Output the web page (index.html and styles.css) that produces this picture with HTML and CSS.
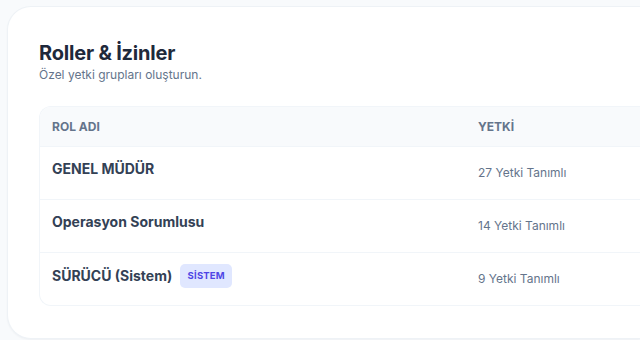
FILE: index.html
```html
<!DOCTYPE html>
<html lang="tr">
<head>
<meta charset="utf-8">
<link rel="stylesheet" href="styles.css">
</head>
<body>
<div class="card">
  <h1 class="title">Roller &amp; İzinler</h1>
  <p class="subtitle">Özel yetki grupları oluşturun.</p>
  <div class="table">
    <div class="row head">
      <div class="c1">ROL ADI</div>
      <div class="c2">YETKİ</div>
    </div>
    <div class="row">
      <div class="c1 name">GENEL MÜDÜR</div>
      <div class="c2 count">27 Yetki Tanımlı</div>
    </div>
    <div class="row">
      <div class="c1 name">Operasyon Sorumlusu</div>
      <div class="c2 count">14 Yetki Tanımlı</div>
    </div>
    <div class="row">
      <div class="c1 name with-badge">SÜRÜCÜ (Sistem) <span class="badge">SİSTEM</span></div>
      <div class="c2 count">9 Yetki Tanımlı</div>
    </div>
  </div>
</div>
</body>
</html>
```
FILE: styles.css
```css
* { box-sizing: border-box; }
html, body { margin: 0; }
body {
  background: #f8fafc;
  font-family: Inter, "Noto Sans", sans-serif;
  padding: 6px 0 0 7px;
  overflow: hidden;
  width: 640px;
  height: 340px;
}
.card {
  width: 633px;
  height: 333px;
  background: #fff;
  border: 1px solid #eef2f6;
  border-right: none;
  border-radius: 24px 0 0 24px;
  box-shadow: 0 1px 2px rgba(15, 23, 42, 0.04);
  padding: 32px 0 0 31px;
}
.title {
  margin: 0;
  font-size: 20px;
  line-height: 28px;
  font-weight: 700;
  color: #1e293b;
  letter-spacing: -0.2px;
}
.subtitle {
  margin: 0;
  font-size: 12px;
  line-height: 16px;
  color: #64748b;
}
.table {
  margin-top: 23px;
  width: 601px;
  border: 1px solid #f1f5f9;
  border-right: none;
  border-radius: 12px 0 0 12px;
  overflow: hidden;
}
.row {
  display: flex;
  height: 53px;
  border-top: 1px solid #f1f5f9;
}
.row.head {
  height: 39px;
  border-top: none;
  background: #f8fafc;
  align-items: center;
  font-size: 12px;
  font-weight: 700;
  color: #64748b;
}
.c1 { width: 426px; padding-left: 12px; }
.c2 { flex: 1; padding-left: 12px; }
.name {
  font-size: 14px;
  font-weight: 700;
  color: #334155;
  line-height: 20px;
  padding-top: 12px;
}
.name.with-badge {
  display: flex;
  align-items: center;
  gap: 8px;
  padding-top: 11px;
  height: 35px;
}
.count {
  font-size: 12px;
  line-height: 20px;
  color: #64748b;
  padding-top: 16px;
}
.badge {
  display: inline-flex;
  align-items: center;
  justify-content: center;
  height: 24px;
  width: 52px;
  background: #e0e7ff;
  color: #4f46e5;
  font-size: 9.5px;
  letter-spacing: 0.2px;
  font-weight: 700;
  border-radius: 5px;
}
```
